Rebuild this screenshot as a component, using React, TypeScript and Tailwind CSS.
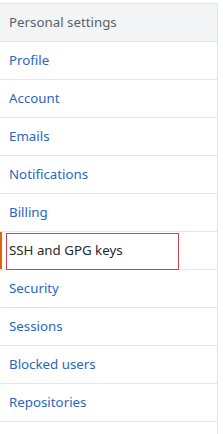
const items = [
  "Profile",
  "Account",
  "Emails",
  "Notifications",
  "Billing",
  "SSH and GPG keys",
  "Security",
  "Sessions",
  "Blocked users",
  "Repositories",
];

const selected = "SSH and GPG keys";

export default function App() {
  return (
    <div className="min-h-screen bg-white pt-[3px] font-['Noto_Sans',sans-serif] text-[13.3px]">
      <nav className="w-[218px] border-t border-r border-[#e1e4e8]">
        <h3 className="flex h-[37px] items-center bg-[#f3f4f6] pl-[9px] text-[13.3px] font-normal text-[#586069]">
          Personal settings
        </h3>
        {items.map((item) =>
          item === selected ? (
            <div
              key={item}
              className="relative flex h-[38px] items-center border-t border-[#e1e4e8] pl-[9px] text-[#24292e]"
            >
              <span className="absolute left-0 top-0 h-full w-[2px] bg-[#e36209]" />
              {item}
              <span className="absolute left-[6px] top-[1px] h-[37px] w-[173px] border border-[#d7414f]" />
            </div>
          ) : (
            <a
              key={item}
              href="#"
              className="flex h-[38px] items-center border-t border-[#e1e4e8] pl-[9px] text-[#2966c4]"
            >
              {item}
            </a>
          )
        )}
        <div className="h-[20px] border-t border-[#e1e4e8]" />
      </nav>
    </div>
  );
}
